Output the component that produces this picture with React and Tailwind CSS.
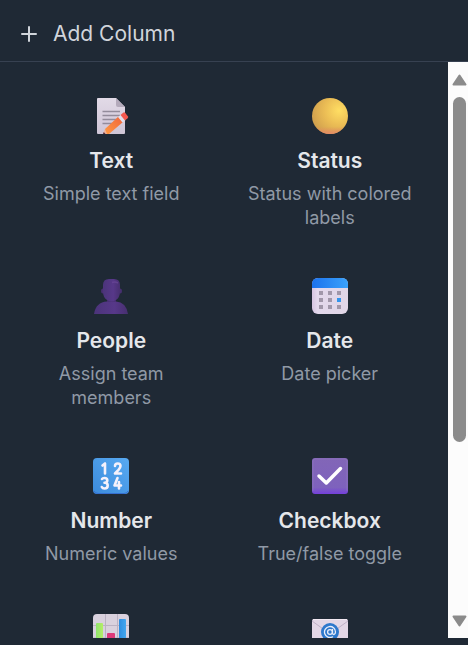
import { Plus } from "lucide-react";

function TextIcon() {
  return (
    <svg viewBox="0 0 36 36" className="size-9" aria-hidden="true">
      <defs>
        <linearGradient id="paper" x1="0" y1="0" x2="0" y2="1">
          <stop offset="0" stopColor="#e2dae7" />
          <stop offset="1" stopColor="#cfc5d6" />
        </linearGradient>
        <linearGradient id="pencil" x1="0" y1="1" x2="1" y2="0">
          <stop offset="0" stopColor="#ff9a43" />
          <stop offset="1" stopColor="#f0643c" />
        </linearGradient>
      </defs>
      <path d="M5 0H23L32 9V35Q32 36 31 36H5Q4 36 4 35V1Q4 0 5 0Z" fill="url(#paper)" />
      <path d="M23 0L32 9H25Q23 9 23 7Z" fill="#b4aabb" />
      <path d="M9.500 13.500H27M9.500 17.500H27M9.500 21.500H25M9.500 25.500H20" stroke="#938b9b" strokeWidth="1.300" />
      <path d="M10 36L12 31L16 36Z" fill="#efb196" />
      <path d="M10 36L10.800 34L12.500 36Z" fill="#52283c" />
      <path d="M12 31L25.500 18.500L30 24L16 36H14Z" fill="url(#pencil)" />
      <path d="M25 19L28 16.500L32.500 22L29.500 24.500Z" fill="#e3dfec" />
      <path d="M27.500 17L30.500 14.500Q31.500 14 32.300 15L35 18.500Q35.500 19.500 34.600 20.300L32 22.500Z" fill="#f5584f" />
    </svg>
  );
}

function StatusIcon() {
  return (
    <svg viewBox="0 0 36 36" className="size-9" aria-hidden="true">
      <defs>
        <radialGradient id="ball" cx="0.75" cy="0.35" r="0.8">
          <stop offset="0" stopColor="#ffde63" />
          <stop offset="0.5" stopColor="#ebbd55" />
          <stop offset="1" stopColor="#cf9e4d" />
        </radialGradient>
        <linearGradient id="ballBase" x1="0" y1="0" x2="0" y2="1">
          <stop offset="0.8" stopColor="#e58a60" stopOpacity="0" />
          <stop offset="1" stopColor="#e58a68" />
        </linearGradient>
      </defs>
      <circle cx="18" cy="18" r="18" fill="url(#ball)" />
      <circle cx="18" cy="18" r="18" fill="url(#ballBase)" />
    </svg>
  );
}

function PeopleIcon() {
  return (
    <svg viewBox="0 0 36 36" className="size-9" aria-hidden="true">
      <defs>
        <linearGradient id="skin" x1="0" y1="0" x2="1" y2="0">
          <stop offset="0" stopColor="#4b347a" />
          <stop offset="0.6" stopColor="#573889" />
          <stop offset="1" stopColor="#472f70" />
        </linearGradient>
      </defs>
      <ellipse cx="9.800" cy="13" rx="1.800" ry="2.500" fill="#472f70" />
      <ellipse cx="27.200" cy="13" rx="1.800" ry="2.500" fill="#472f70" />
      <path d="M14 19H23V26H14Z" fill="#402a67" />
      <path d="M1 36Q3 24 14 23.500H23Q33 24 35 36Z" fill="url(#skin)" />
      <path d="M10 7Q10 1 16 1H21Q27 1 27 7V14Q27 19 23 22Q18.500 25 14 22Q10 19 10 14Z" fill="url(#skin)" />
      <path d="M19 4.500Q22 3.500 25 5" stroke="#6b4898" strokeWidth="1.500" fill="none" opacity="0.7" />
    </svg>
  );
}

function DateIcon() {
  return (
    <svg viewBox="0 0 36 36" className="size-9" aria-hidden="true">
      <defs>
        <linearGradient id="calTop" x1="0" y1="0" x2="1" y2="0">
          <stop offset="0" stopColor="#1c72ed" />
          <stop offset="1" stopColor="#3ba2fb" />
        </linearGradient>
        <linearGradient id="calPage" x1="0" y1="0" x2="1" y2="0">
          <stop offset="0" stopColor="#d6c4e1" />
          <stop offset="0.15" stopColor="#e3d8ec" />
          <stop offset="1" stopColor="#e0d6e7" />
        </linearGradient>
      </defs>
      <rect width="36" height="36" rx="6" fill="url(#calPage)" />
      <path d="M0 10V6Q0 0 6 0H30Q36 0 36 6V10Z" fill="url(#calTop)" />
      <path d="M7 13h4v4H7zM16 13h4v4h-4zM25 13h4v4h-4zM7 20h4v4H7zM16 20h4v4h-4zM7 27h4v4H7zM16 27h4v4h-4zM25 27h4v4h-4z" fill="#a197aa" />
      <path d="M25 20h4v4h-4z" fill="#3395ed" />
    </svg>
  );
}

function NumberIcon() {
  return (
    <svg viewBox="0 0 36 36" className="size-9" aria-hidden="true">
      <defs>
        <linearGradient id="numTile" x1="1" y1="0" x2="0" y2="1">
          <stop offset="0" stopColor="#58aaf2" />
          <stop offset="1" stopColor="#3c8bdc" />
        </linearGradient>
      </defs>
      <rect width="36" height="36" rx="4" fill="url(#numTile)" />
      <path d="M1 33Q2 35.500 5 35.500H31Q34 35.500 35 33" stroke="#356fd0" fill="none" />
      <g stroke="#f5f1fb" strokeWidth="2.600" strokeLinecap="round" strokeLinejoin="round" fill="none">
        <path d="M9.500 7.500L12 5.500V15.500" />
        <path d="M22 8Q22 5.500 24.700 5.500Q27.500 5.500 27.500 8Q27.500 9.500 25.500 11.800L22 15.500H28" />
        <path d="M9 21Q9.500 20 11.500 20Q14.300 20 14.300 22.300Q14.300 24.800 11.500 24.800Q14.700 24.800 14.700 27.500Q14.700 30.500 11.500 30.500Q9.500 30.500 8.800 29" />
        <path d="M24.500 20L21.500 27.500H28M26 24V30.500" />
      </g>
    </svg>
  );
}

function CheckboxIcon() {
  return (
    <svg viewBox="0 0 36 36" className="size-9" aria-hidden="true">
      <defs>
        <linearGradient id="checkTile" x1="0" y1="0" x2="0" y2="1">
          <stop offset="0" stopColor="#8266b7" />
          <stop offset="0.82" stopColor="#7e62bd" />
          <stop offset="1" stopColor="#743fdc" />
        </linearGradient>
      </defs>
      <rect width="36" height="36" rx="3" fill="url(#checkTile)" />
      <path d="M1 33V3Q1 1 3 1H33Q35 1 35 3V33" stroke="#947cc2" strokeOpacity="0.5" fill="none" />
      <path d="M7 18L14.300 25L28.500 10.500" stroke="#ffffff" strokeWidth="3.500" strokeLinecap="round" strokeLinejoin="round" fill="none" />
    </svg>
  );
}

function ChartIcon() {
  return (
    <svg viewBox="0 0 36 36" className="size-9" aria-hidden="true">
      <defs>
        <linearGradient id="barGreen" x1="0" y1="0" x2="1" y2="0">
          <stop offset="0" stopColor="#8fe46d" />
          <stop offset="1" stopColor="#b5ee69" />
        </linearGradient>
        <linearGradient id="barBlue" x1="0" y1="0" x2="1" y2="0">
          <stop offset="0" stopColor="#2e8de0" />
          <stop offset="1" stopColor="#43a7ef" />
        </linearGradient>
      </defs>
      <rect width="36" height="36" rx="4" fill="#d9d1de" />
      <path d="M12.500 0V36M24.500 0V36M0 11.500H36M0 24H36" stroke="#bbb2c4" />
      <path d="M3 36V10Q3 9 4 9H9Q10 9 10 10V36Z" fill="url(#barGreen)" />
      <path d="M14 36V20Q14 19 15 19H21Q22 19 22 20V36Z" fill="#dd3979" />
      <path d="M26 36V6Q26 5 27 5H32Q33 5 33 6V36Z" fill="url(#barBlue)" />
    </svg>
  );
}

function EmailIcon() {
  return (
    <svg viewBox="0 0 36 36" className="size-9" aria-hidden="true">
      <rect y="5" width="36" height="27" rx="2" fill="#e3d7e6" />
      <path d="M0 7L14 17M36 7L22 17" stroke="#bfb0c6" />
      <path d="M1 5.500H35" stroke="#f2e9f2" />
      <circle cx="18" cy="18" r="9" fill="#2d78cc" />
      <circle cx="18" cy="18" r="2.400" stroke="#e9edfa" strokeWidth="1.300" fill="none" />
      <path d="M20.500 15.500V19Q20.500 20.500 21.800 20.500Q23.500 20.300 23.500 18A5.500 5.500 0 1 0 20.500 22.900" stroke="#e9edfa" strokeWidth="1.300" strokeLinecap="round" fill="none" />
    </svg>
  );
}

const columnTypes = [
  { title: "Text", description: "Simple text field", Icon: TextIcon },
  { title: "Status", description: "Status with colored labels", Icon: StatusIcon },
  { title: "People", description: "Assign team members", Icon: PeopleIcon },
  { title: "Date", description: "Date picker", Icon: DateIcon },
  { title: "Number", description: "Numeric values", Icon: NumberIcon },
  { title: "Checkbox", description: "True/false toggle", Icon: CheckboxIcon },
  { title: "Chart", description: "", Icon: ChartIcon },
  { title: "Email", description: "", Icon: EmailIcon },
];

function ColumnTypeCard({ title, description, Icon }) {
  return (
    <button
      type="button"
      className="flex flex-col items-center justify-start rounded-xl px-4 pt-6 pb-[18px] text-center hover:bg-[#212c38]"
    >
      <Icon />
      <span className="mt-[13px] text-[21px] leading-7 font-semibold text-[#e5e7eb]">{title}</span>
      <span className="mt-[7px] text-lg leading-6 text-[#9099a6]">{description}</span>
    </button>
  );
}

function ScrollRail() {
  return (
    <div className="flex w-5 shrink-0 flex-col items-center bg-[#fcfcfc] pt-3 pb-[11px] pl-[3px]" aria-hidden="true">
      <svg viewBox="0 0 15 12" className="h-3 w-[15px] shrink-0">
        <path d="M7.500 1.500L13.500 10.500H1.500Z" fill="#8b8b8b" stroke="#8b8b8b" strokeWidth="2" strokeLinejoin="round" />
      </svg>
      <div className="my-[11px] min-h-0 w-[13px] flex-1">
        <div className="h-[68%] rounded-full bg-[#8b8b8b]" />
      </div>
      <svg viewBox="0 0 15 12" className="h-3 w-[15px] shrink-0">
        <path d="M7.500 10.500L13.500 1.500H1.500Z" fill="#8b8b8b" stroke="#8b8b8b" strokeWidth="2" strokeLinejoin="round" />
      </svg>
    </div>
  );
}

export default function App() {
  return (
    <div className="flex h-screen flex-col bg-[#1f2935] pb-[7px] font-['Inter',sans-serif]">
      <header className="flex shrink-0 border-b border-[#374151]">
        <button type="button" className="flex items-center gap-3 px-[17px] pt-5 pb-[13px] text-[21px] leading-7 text-[#d1d5db]">
          <Plus className="size-6" strokeWidth={2} aria-hidden="true" />
          Add Column
        </button>
      </header>
      <div className="flex min-h-0 flex-1">
        <main className="min-w-0 flex-1 overflow-y-auto [scrollbar-width:none]">
          <div className="grid grid-cols-2 gap-[6px] pt-3 pr-3 pb-3 pl-[5px]">
            {columnTypes.map((type) => (
              <ColumnTypeCard key={type.title} {...type} />
            ))}
          </div>
        </main>
        <ScrollRail />
      </div>
    </div>
  );
}
